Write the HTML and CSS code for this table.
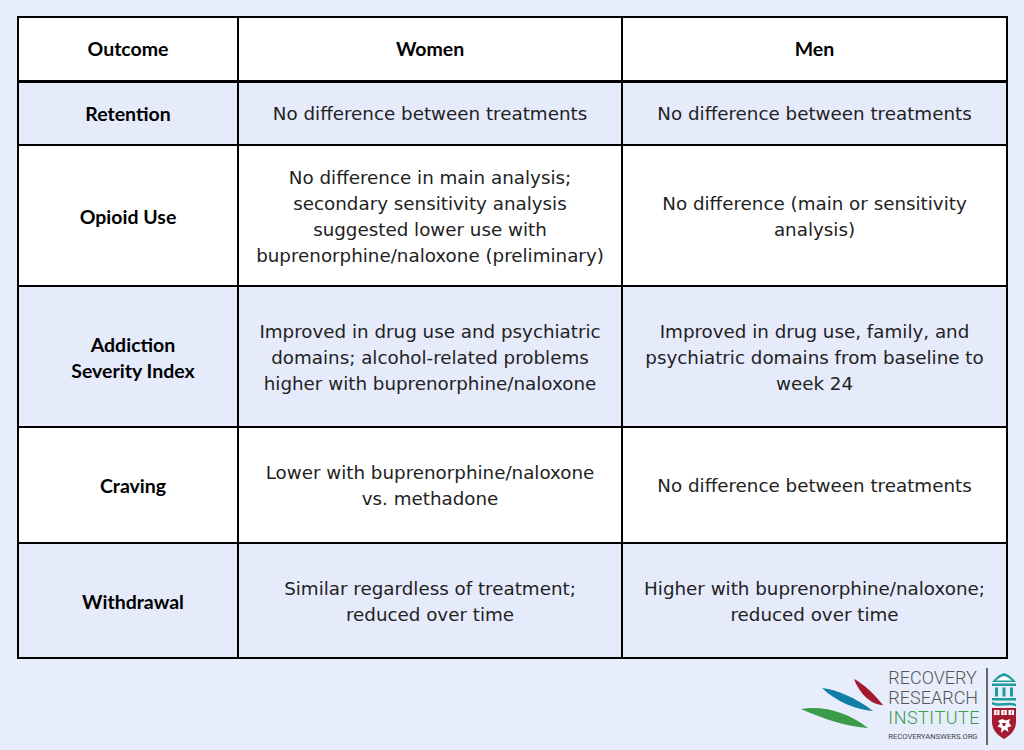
FILE: index.html
```html
<!DOCTYPE html>
<html lang="en">
<head>
<meta charset="utf-8">
<title>Outcomes by Sex</title>
<link rel="stylesheet" href="styles.css">
</head>
<body>
<div class="page">
  <table class="outcomes">
    <colgroup>
      <col class="c1"><col class="c2"><col class="c3">
    </colgroup>
    <thead>
      <tr class="r-head">
        <th>Outcome</th>
        <th>Women</th>
        <th>Men</th>
      </tr>
    </thead>
    <tbody>
      <tr class="shade r-ret">
        <th>Retention</th>
        <td>No difference between treatments</td>
        <td>No difference between treatments</td>
      </tr>
      <tr class="r-big">
        <th>Opioid Use</th>
        <td>No difference in main analysis;<br>secondary sensitivity analysis<br>suggested lower use with<br>buprenorphine/naloxone (preliminary)</td>
        <td>No difference (main or sensitivity<br>analysis)</td>
      </tr>
      <tr class="shade r-big">
        <th class="off">Addiction<br>Severity Index</th>
        <td>Improved in drug use and psychiatric<br>domains; alcohol-related problems<br>higher with buprenorphine/naloxone</td>
        <td>Improved in drug use, family, and<br>psychiatric domains from baseline to<br>week 24</td>
      </tr>
      <tr class="r-mid">
        <th class="off">Craving</th>
        <td>Lower with buprenorphine/naloxone<br>vs. methadone</td>
        <td>No difference between treatments</td>
      </tr>
      <tr class="shade r-mid2">
        <th class="off">Withdrawal</th>
        <td>Similar regardless of treatment;<br>reduced over time</td>
        <td>Higher with buprenorphine/naloxone;<br>reduced over time</td>
      </tr>
    </tbody>
  </table>

  <div class="logo">
    <svg class="swoosh" width="86" height="62" viewBox="0 0 86 62" aria-hidden="true">
      <path fill="#a3192e" d="M56,9 C66,14 76,24 85,35 C74,35 62,25 56,9 Z"/>
      <path fill="#0f7fa3" d="M24,18 C40,20 58,28 75,41 C60,40 38,32 24,18 Z"/>
      <path fill="#3a9b48" d="M3,39 C25,35 50,42 70,58 C50,57 26,49 3,39 Z"/>
    </svg>
    <div class="logo-text">
      <div class="lt-line">RECOVERY</div>
      <div class="lt-line">RESEARCH</div>
      <div class="lt-line lt-green">INSTITUTE</div>
      <div class="lt-small">RECOVERYANSWERS.ORG</div>
    </div>
    <div class="divider"></div>
    <div class="marks">
      <svg width="24" height="36" viewBox="0 0 24 36" aria-hidden="true">
        <path fill="#1f9c9c" d="M0,11 C4,6 8,3 12,2 C16,3 20,6 24,11 Z"/>
        <path fill="#ffffff" d="M4,9.5 C7,7 9.5,5.5 12,5 C14.5,5.5 17,7 20,9.5 Z"/>
        <rect fill="#1f9c9c" x="0" y="12.5" width="24" height="2.5"/>
        <rect fill="#1f9c9c" x="3" y="16.5" width="3" height="9"/>
        <rect fill="#1f9c9c" x="10.5" y="16.5" width="3" height="9"/>
        <rect fill="#1f9c9c" x="18" y="16.5" width="3" height="9"/>
        <rect fill="#1f9c9c" x="0" y="27" width="24" height="2.5"/>
        <path fill="#1f9c9c" d="M0,31 C8,34 16,30 24,33 L24,35.5 C16,32.5 8,36.5 0,33.5 Z"/>
      </svg>
      <svg width="24" height="31" viewBox="0 0 24 31" aria-hidden="true">
        <path fill="#a51c30" d="M0,0 H24 V14 C24,23 17,28 12,31 C7,28 0,23 0,14 Z"/>
        <rect fill="#ffffff" x="2" y="2" width="5.5" height="5"/>
        <rect fill="#ffffff" x="9.25" y="2" width="5.5" height="5"/>
        <rect fill="#ffffff" x="16.5" y="2" width="5.5" height="5"/>
        <rect fill="#a51c30" x="4.5" y="2.5" width="0.8" height="4"/>
        <rect fill="#a51c30" x="11.6" y="2.5" width="0.8" height="4"/>
        <rect fill="#a51c30" x="18.9" y="2.5" width="0.8" height="4"/>
        <path fill="#ffffff" d="M6,13 L10,11 L14,12.5 L18,11 L17,15 L19.5,18 L15.5,19.5 L16.5,24 L12.5,21.5 L9,25 L9.5,20 L5.5,18.5 L8,15.5 Z"/>
        <path fill="#a51c30" d="M10,15 L14,15 L13,18 L11,18 Z"/>
      </svg>
    </div>
  </div>
</div>
</body>
</html>
```

FILE: styles.css
```css
html, body {
  margin: 0;
  padding: 0;
}

body {
  background: #e8edfc;
  width: 1024px;
  height: 750px;
  overflow: hidden;
}

.page {
  padding: 16px 0 0 17px;
}

.outcomes {
  width: 989px;
  table-layout: fixed;
  border-collapse: collapse;
  border: 2px solid #000;
  background: #ffffff;
}

.c1 { width: 220px; }
.c2 { width: 384px; }
.c3 { width: 385px; }

.outcomes th,
.outcomes td {
  border: 2px solid #000;
  text-align: center;
  vertical-align: middle;
  padding: 2px 10px 0;
}

.outcomes th {
  font-family: "Lato", "DejaVu Sans", sans-serif;
  font-weight: 700;
  font-size: 19.5px;
  line-height: 26px;
  color: #000;
}

.outcomes td {
  font-family: "DejaVu Sans", "Liberation Sans", sans-serif;
  font-size: 18.3px;
  line-height: 26px;
  color: #222222;
}

.outcomes thead th {
  border-bottom: 3px solid #000;
  padding-top: 0;
}

.outcomes th.off {
  padding-left: 20px;
}

.shade th,
.shade td {
  background: #e6ebfc;
}

.r-head { height: 64px; }
.r-ret { height: 64px; }
.r-big { height: 141px; }
.r-mid { height: 116px; }
.r-mid2 { height: 115px; }

/* Logo */
.logo {
  display: flex;
  align-items: flex-start;
  width: fit-content;
  margin: 9px 8px 0 auto;
}

.swoosh {
  display: block;
  margin-top: 2px;
}

.logo-text {
  margin-left: 4px;
  font-family: "Roboto", "Liberation Sans", sans-serif;
  font-weight: 300;
  color: #555555;
}

.lt-line {
  font-size: 18px;
  line-height: 20px;
  white-space: nowrap;
}

.lt-green {
  color: #3a9b48;
  letter-spacing: 0.5px;
}

.lt-small {
  font-size: 7.6px;
  font-weight: 400;
  line-height: 10px;
  margin-top: 4px;
  color: #444444;
  white-space: nowrap;
}

.divider {
  width: 2px;
  height: 77px;
  background: #666666;
  margin: 0 4px 0 6px;
}

.marks {
  display: flex;
  flex-direction: column;
  gap: 1px;
  padding-top: 3px;
}

.marks svg {
  display: block;
}
```
